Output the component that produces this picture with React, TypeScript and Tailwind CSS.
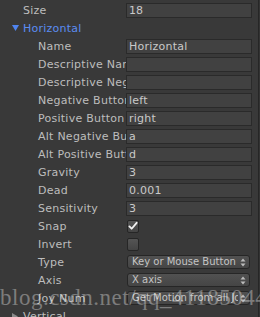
import React from "react";

const Label = ({ text, indent }: { text: string; indent: number }) => (
  <div
    className="w-[126px] shrink-0 overflow-hidden whitespace-nowrap tracking-[0.25px] text-[#bdbdbd]"
    style={{ paddingLeft: indent }}
  >
    {text}
  </div>
);

const FieldRow = ({ label, value }: { label: string; value: string }) => (
  <div className="flex h-[18px] shrink-0 items-center">
    <Label text={label} indent={38} />
    <div className="flex h-[15px] w-[126px] items-center overflow-hidden whitespace-nowrap border border-[#2a2a2a] bg-[#414141] pl-[2px] tracking-[0.25px] text-[#c9c9c9]">
      {value}
    </div>
  </div>
);

const Check = ({ checked }: { checked: boolean }) => (
  <div className="ml-[1px] flex h-[13px] w-[12px] items-center justify-center rounded-[2px] border border-[#262626] bg-gradient-to-b from-[#555555] to-[#444444]">
    {checked && (
      <svg width="11" height="10" viewBox="0 0 11 10">
        <path d="M1.5 5.5 L4 8 L9.5 1.5" stroke="#f2f2f2" strokeWidth="2" fill="none" strokeLinecap="round" strokeLinejoin="round" />
      </svg>
    )}
  </div>
);

const CheckRow = ({ label, checked }: { label: string; checked: boolean }) => (
  <div className="flex h-[18px] shrink-0 items-center">
    <Label text={label} indent={38} />
    <Check checked={checked} />
  </div>
);

const DropRow = ({ label, value }: { label: string; value: string }) => (
  <div className="flex h-[18px] shrink-0 items-center">
    <Label text={label} indent={38} />
    <div className="ml-[1px] flex h-[14px] w-[123px] items-center rounded-[3px] border border-[#262626] bg-gradient-to-b from-[#515151] to-[#454545] pl-[4px] pr-[3px] text-[10px] text-[#c4c4c4]">
      <span className="flex-1 overflow-hidden whitespace-nowrap">{value}</span>
      <svg width="6" height="9" viewBox="0 0 6 9" className="ml-[2px] shrink-0">
        <path d="M3 0.5 L5.5 3.5 L0.5 3.5 Z" fill="#bcbcbc" />
        <path d="M3 8.5 L5.5 5.5 L0.5 5.5 Z" fill="#bcbcbc" />
      </svg>
    </div>
  </div>
);

export default function App() {
  return (
    <div
      className="relative flex h-[317px] w-[260px] overflow-hidden bg-[#393939] text-[11px] leading-none"
      style={{ fontFamily: "'DejaVu Sans', sans-serif" }}
    >
      <div className="flex w-[258px] shrink-0 flex-col pt-[1px]">
        <div className="flex h-[18px] shrink-0 items-center">
          <Label text="Size" indent={23} />
          <div className="flex h-[15px] w-[126px] items-center border border-[#2a2a2a] bg-[#414141] pl-[2px] text-[#c9c9c9]">
            18
          </div>
        </div>
        <div className="flex h-[18px] shrink-0 items-center pl-[12px] tracking-[0.25px] text-[#5b8cf2]">
          <svg width="7" height="6" viewBox="0 0 7 6" className="mr-[4px]">
            <path d="M0 0 L7 0 L3.5 6 Z" fill="#4f84f0" />
          </svg>
          Horizontal
        </div>
        <FieldRow label="Name" value="Horizontal" />
        <FieldRow label="Descriptive Name" value="" />
        <FieldRow label="Descriptive Negative Name" value="" />
        <FieldRow label="Negative Button" value="left" />
        <FieldRow label="Positive Button" value="right" />
        <FieldRow label="Alt Negative Button" value="a" />
        <FieldRow label="Alt Positive Button" value="d" />
        <FieldRow label="Gravity" value="3" />
        <FieldRow label="Dead" value="0.001" />
        <FieldRow label="Sensitivity" value="3" />
        <CheckRow label="Snap" checked={true} />
        <CheckRow label="Invert" checked={false} />
        <DropRow label="Type" value="Key or Mouse Button" />
        <DropRow label="Axis" value="X axis" />
        <DropRow label="Joy Num" value="Get Motion from all Joysticks" />
        <div className="flex h-[18px] shrink-0 items-center pl-[12px] tracking-[0.25px] text-[#bdbdbd]">
          <svg width="6" height="7" viewBox="0 0 6 7" className="mr-[5px]">
            <path d="M0 0 L6 3.5 L0 7 Z" fill="#8a8a8a" />
          </svg>
          Vertical
        </div>
      </div>
      <div className="w-[1px] shrink-0 bg-[#262626]" />
      <div className="w-[1px] shrink-0 bg-[#333333]" />
      <div
        className="pointer-events-none absolute left-0 top-[286px] whitespace-nowrap text-[23px] leading-none tracking-[0.5px] text-white/35"
        style={{ fontFamily: "'Liberation Serif', serif" }}
      >
        blog.csdn.net/qq_41185044
      </div>
    </div>
  );
}
